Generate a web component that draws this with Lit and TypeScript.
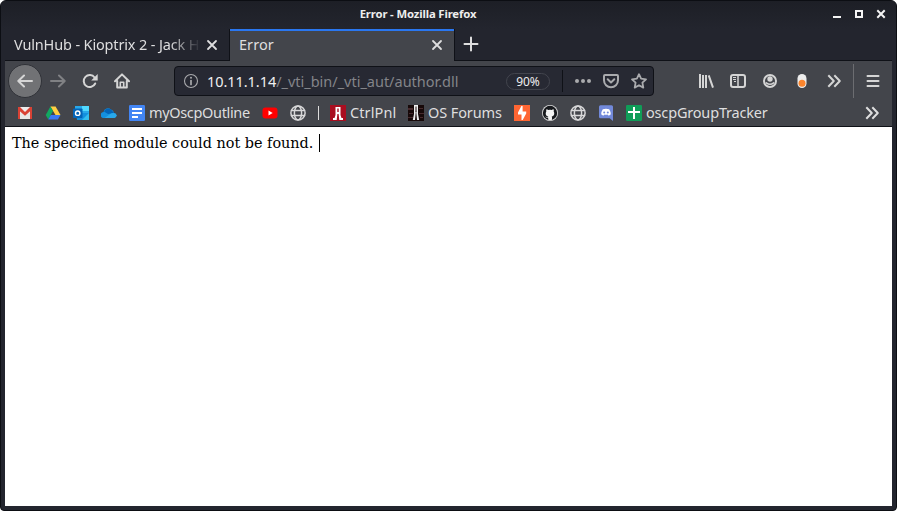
import { LitElement, html, svg, css } from "lit";
import { customElement } from "lit/decorators.js";
import { styleMap } from "lit/directives/style-map.js";

const icon = (body: unknown, size = 16) =>
  html`<svg width=${size} height=${size} viewBox="0 0 16 16" fill="none" stroke="currentColor" stroke-width="2" stroke-linecap="round" stroke-linejoin="round">${body}</svg>`;

const icons = {
  back: svg`<path d="M15 8H1.500M7 2.500L1.300 8 7 13.500"/>`,
  forward: svg`<path d="M1 8h13.500M9 2.500l5.700 5.500L9 13.500"/>`,
  reload: svg`<path d="M13.200 10.500A6 6 0 1 1 12.600 4.500"/><path d="M15.700 1v6.500H9.200z" fill="currentColor" stroke="none"/>`,
  home: svg`<path d="M1 8.200L8 1.400l7 6.800M3.200 8v6.600h9.600V8"/><path d="M6.300 14v-4.700h3.400V14" stroke-width="1.600"/>`,
  info: svg`<circle cx="8" cy="8" r="6.500" stroke-width="1.100"/><path d="M8 7.500v4" stroke-width="1.700"/><circle cx="8" cy="4.800" r="1" fill="currentColor" stroke="none"/>`,
  dots: svg`<g fill="currentColor" stroke="none"><circle cx="2" cy="8" r="2"/><circle cx="8" cy="8" r="2"/><circle cx="14" cy="8" r="2"/></g>`,
  pocket: svg`<path d="M2 2h12q1 0 1 1v4.300a7 7 0 0 1-14 0V3q0-1 1-1z"/><path d="M4.700 6.300L8 9.400l3.300-3.100"/>`,
  star: svg`<path d="M8 1.200l2.100 4.500 4.900.6-3.600 3.400.9 4.900L8 12.200l-4.300 2.400.9-4.900L1 6.300l4.900-.6z" stroke-width="1.800"/>`,
  library: svg`<path d="M2 1v14M5 2v13M8 2v13M10.700 2.300L15 14.700" stroke-width="2" stroke-linecap="butt"/>`,
  sidebar: svg`<rect x="1" y="2" width="14" height="12" rx="2"/><path d="M8 2v12" stroke-width="1.500"/><path d="M3 4.500h3M3 6.500h3M4 8.500h2" stroke-width="1" stroke-linecap="butt"/>`,
  account: svg`<circle cx="8" cy="8" r="6"/><circle cx="8" cy="6" r="2.700" fill="currentColor" stroke="none"/><path d="M4.300 9.800q3.700 2.700 7.400 0" stroke-width="1.500"/>`,
  pill: svg`<rect x="3.500" y="1" width="9" height="14" rx="4.500" fill="#ededed" stroke="none"/><circle cx="8" cy="10.300" r="3.500" fill="#fb842c" stroke="none"/>`,
  more: svg`<path d="M3 3l4.800 5L3 13M9 3l4.800 5L9 13" stroke-linecap="square"/>`,
  menu: svg`<path d="M2.500 3h11M2.500 8h11M2.500 13h11"/>`,
  close: svg`<path d="M4 4l8 8M12 4L4 12" stroke-width="1.800"/>`,
  plus: svg`<path d="M8 1.500v13M1.500 8h13"/>`,
  minimize: svg`<path d="M4 11h8" stroke-linecap="butt"/>`,
  maximize: svg`<rect x="5" y="5" width="6" height="6" stroke-linejoin="miter"/>`,
  closeWindow: svg`<path d="M5 5l6 6M11 5L5 11" stroke-width="2" stroke-linecap="square"/>`,
};

const globe = svg`<g stroke="#d7d7d8" stroke-width="1.500"><circle cx="8" cy="8" r="7.100"/><ellipse cx="8" cy="8" rx="3.600" ry="7"/><path d="M1.500 5.500h13M1.500 10.500h13"/></g>`;
const solid = (body: unknown) => svg`<g stroke="none">${body}</g>`;

interface Bookmark { art: unknown; label?: string; width: number; spacing?: number }

const bookmarks: Bookmark[] = [
  { width: 28, art: solid(svg`<path d="M1 2h14v12H1z" fill="#eee"/><path d="M1 2h2l5 5 5-5h2v12h-2V6.500L8 11 3 6.500V14H1z" fill="#d94235"/><path d="M3 6.500l5 4.500 5-4.500V14H3z" fill="#e7e7e7"/>`) },
  { width: 28, art: solid(svg`<path d="M5.400 1.500h5.200L15.500 10h-5z" fill="#ffcf42"/><path d="M5.400 1.500L8 6 3.300 14.500.7 10z" fill="#11a861"/><path d="M5.800 10h9.700l-2.600 4.500H3.300z" fill="#3978f5"/>`) },
  { width: 28, art: solid(svg`<path d="M2 1h14v8H2z" fill="#28a8ea"/><path d="M9 1h7v5H9z" fill="#50d9ff"/><path d="M3 8h13v7H4z" fill="#1490df"/><path d="M16 8v7H9z" fill="#32bdf0"/><rect y="3.500" width="9.500" height="9.500" rx=".8" fill="#0364b8"/><circle cx="4.700" cy="8.200" r="2.200" fill="none" stroke="#fff" stroke-width="1.400"/>`) },
  { width: 28, art: solid(svg`<path d="M3 13a3 3 0 0 1-.5-6A4.500 4.500 0 0 1 10 4.600a4 4 0 0 1 3 3.400 2.600 2.600 0 0 1 .3 5z" fill="#1490df"/><path d="M3 6.500A4.500 4.500 0 0 1 10 4.600l3 3.400-6 1z" fill="#0364b8"/><path d="M3.500 13l7-4.800q4.500-1 5.200 2-.1 2.700-2.400 2.800z" fill="#28a8ea"/>`) },
  { width: 133, spacing: -0.34, label: "myOscpOutline", art: solid(svg`<rect width="16" height="16" rx="1.200" fill="#4285f4"/><path d="M3 3h10v2H3zM3 7h10v2H3zM3 11h6v2H3z" fill="#fff"/>`) },
  { width: 28, art: solid(svg`<rect x=".5" y="2.500" width="15" height="11" rx="3" fill="#f00"/><path d="M6.500 5.500L10.700 8l-4.200 2.500z" fill="#fff"/>`) },
  { width: 28, art: globe },
  { width: 12, art: solid(svg`<path d="M0 1h1v14H0z" fill="#ddd"/>`) },
  { width: 78, spacing: 0.1, label: "CtrlPnl", art: solid(svg`<path d="M0 0h16v16H0z" fill="#a90e20"/><path d="M5.500 2h5v8l1 3H13v2H9.300l-.7-6H7.400l-.7 6H3v-2h1.500l1-3z" fill="#fff"/><path d="M7.300 3.500h1.400V7H7.300z" fill="#a90e20"/>`) },
  { width: 106, spacing: -0.1, label: "OS Forums", art: solid(svg`<path d="M0 0h16v16H0z" fill="#170909"/><path d="M0 3h5v2H0zM1 8h4v1H1zM0 12h5v1H0zM11 3h4v1h-4zM11 8h5v1h-5zM12 12h3v1h-3z" fill="#482a2d"/><path d="M6 0h4v9l1.200 6H9L8 5 7 15H4.800L6 9z" fill="#eee"/><path d="M7.500 1.500h1V7h-1z" fill="#211010"/>`) },
  { width: 28, art: solid(svg`<path d="M0 0h16v16H0z" fill="#ff6633"/><path d="M8.600 1v5.500h3.600v2L8.700 15H7.500V9.500H4V7.500L7.400 1z" fill="#fff"/>`) },
  { width: 28, art: solid(svg`<circle cx="8" cy="8" r="8" fill="#ddd"/><circle cx="8" cy="8" r="7.200" fill="#17191d"/><path d="M6.200 14.800v-2c-1.800.3-2.200-.9-2.900-1.400.9-.2 1.400.9 2.200.8.4 0 .7-.3.8-.7C3.500 11 3.300 8.500 4.300 6.500 4.100 5.700 4.100 5 4.400 4.200c.8 0 1.400.4 1.900.8q1.700-.3 3.400 0c.5-.4 1.100-.8 1.900-.8.3.8.3 1.500.1 2.300 1 2 .8 4.500-2 5q.3.500.3 1.300v2q-1.900.5-3.800 0z" fill="#f4f4f4"/>`) },
  { width: 28, art: globe },
  { width: 28, art: solid(svg`<path d="M2.500.3h11q1.500 0 1.500 1.500V16l-3.300-2.700H2.500Q1 13.300 1 11.800v-10Q1 .3 2.500.3z" fill="#7289da"/><path d="M4.800 4.300q3.200-1 6.400 0 1.400 2 1.600 5-1 1.200-2.500 1.200l-.8-1q-1.500.4-3 0l-.8 1q-1.500 0-2.500-1.200.2-3 1.600-5z" fill="#fff"/><circle cx="6.200" cy="7.500" r="1" fill="#7289da"/><circle cx="9.800" cy="7.500" r="1" fill="#7289da"/>`) },
  { width: 150, spacing: -0.18, label: "oscpGroupTracker", art: solid(svg`<rect width="16" height="16" rx="1.200" fill="#0f9d58"/><path d="M7 2h2v4h5v2H9v6H7V8H2V6h5z" fill="#fff"/>`) },
];

@customElement("app-root")
export class AppRoot extends LitElement {
  static styles = css`
    :host { display: block; width: 897px; height: 511px; background: #fff; font: 14.500px/20px "Noto Sans", sans-serif; color: #dededf; }
    * { box-sizing: border-box; }
    svg { display: block; flex: none; }
    .window { height: 511px; border: 1px solid #0c0e13; border-radius: 6px 6px 4px 4px; background: #23252e; padding: 0 4px 4px; display: flex; flex-direction: column; overflow: hidden; }
    .titlebar { height: 28px; display: grid; grid-template-columns: 2px 1fr 66px; background: linear-gradient(#1d1f26, #23252e); margin: 0 -4px; padding: 0 1px 0 4px; flex: none; }
    .title { grid-column: 2; text-align: center; color: #eee; font-weight: 700; font-size: 11.300px; letter-spacing: -0.130px; line-height: 25px; white-space: pre; }
    .controls { display: flex; gap: 6px; color: #f4f4f4; padding-top: 5px; }
    .tabs { display: flex; height: 32px; flex: none; border-bottom: 1px solid #0f1117; }
    .tab { display: flex; align-items: center; width: 224px; height: 32px; padding: 0 9px; }
    .tab.active { background: #43454b; border-top: 2px solid #2a77f0; padding-bottom: 2px; }
    .label { flex: 1; white-space: nowrap; line-height: 18px; padding-bottom: 2px; }
    .active .label { letter-spacing: 0.050px; }
    .faded { letter-spacing: -0.150px; mask-image: linear-gradient(90deg, #000 84%, transparent 101%); }
    .tab-close { margin-left: 5px; }
    .edge { width: 1px; background: #0f1117; height: 32px; flex: none; }
    .new { margin: 7px 0 0 8px; }
    .nav { height: 40px; flex: none; display: flex; align-items: center; background: #43454b; padding: 0 3px; }
    .button { width: 32px; height: 32px; display: grid; place-items: center; color: #d5d5d5; flex: none; }
    .round { width: 34px; height: 34px; background: #717275; border-radius: 50%; border: 1px solid #303238; }
    .disabled { color: #808184; }
    .url { width: 480px; height: 30px; margin: 0 36px; border: 1px solid #0f1117; border-radius: 4px; background: #272933; display: flex; align-items: center; flex: none; padding-left: 8px; color: #a9aaad; }
    .address { flex: 1; white-space: nowrap; margin-left: 8px; color: #838489; letter-spacing: -0.010px; }
    .host { color: #f0f0f1; letter-spacing: -0.060px; }
    .zoom { width: 44px; height: 17px; border: 1px solid #43454e; border-radius: 9px; font-size: 12px; line-height: 15px; text-align: center; color: #eee; }
    .split { width: 1px; height: 22px; background: #0f1117; margin: 0 12px; }
    .actions { display: flex; gap: 12px; padding-right: 6px; }
    .rule { width: 1px; height: 34px; background: #6c6d71; margin: 0 3px; }
    .bookmarks { height: 26px; flex: none; background: #43454b; border-bottom: 1px solid #0f1117; display: flex; align-items: center; padding: 0 12px 1px; }
    .bookmark { display: flex; align-items: center; gap: 4px; height: 16px; white-space: nowrap; flex: none; }
    .bookmark span { line-height: 18px; padding-bottom: 2px; }
    .overflow { margin-left: auto; }
    .page { flex: 1; background: #fff; color: #000; padding: 7px; display: flex; align-items: flex-start; font: 14.400px/18px "DejaVu Serif", serif; white-space: nowrap; }
    .caret { width: 1px; height: 18px; background: #000; margin-left: 6px; }
  `;

  render() {
    const button = (name: keyof typeof icons, extra = "") => html`<div class="button ${extra}">${icon(icons[name])}</div>`;
    return html`<div class="window">
      <div class="titlebar"><div class="title">Error - Mozilla Firefox</div>
        <div class="controls">${icon(icons.minimize)}${icon(icons.maximize)}${icon(icons.closeWindow)}</div></div>
      <div class="tabs">
        <div class="tab"><div class="label faded">VulnHub - Kioptrix 2 - Jack H</div><div class="tab-close">${icon(icons.close)}</div></div>
        <div class="edge"></div>
        <div class="tab active"><div class="label">Error</div><div class="tab-close">${icon(icons.close)}</div></div>
        <div class="edge"></div><div class="new">${icon(icons.plus)}</div>
      </div>
      <div class="nav">
        ${button("back", "round")}${button("forward", "disabled")}${button("reload")}${button("home")}
        <div class="url">${icon(icons.info)}<div class="address"><span class="host">10.11.1.14</span>/_vti_bin/_vti_aut/author.dll</div>
          <div class="zoom">90%</div><div class="split"></div>
          <div class="actions">${icon(icons.dots)}${icon(icons.pocket)}${icon(icons.star)}</div></div>
        ${button("library")}${button("sidebar")}${button("account")}${button("pill")}${button("more")}
        <div class="rule"></div>${button("menu")}
      </div>
      <div class="bookmarks">
        ${bookmarks.map((b) => html`<div class="bookmark" style=${styleMap({ width: `${b.width}px`, letterSpacing: `${b.spacing ?? 0}px` })}>${icon(b.art)}${b.label ? html`<span>${b.label}</span>` : ""}</div>`)}
        <div class="overflow">${icon(icons.more)}</div>
      </div>
      <div class="page"><span>The specified module could not be found.</span><div class="caret"></div></div>
    </div>`;
  }
}
